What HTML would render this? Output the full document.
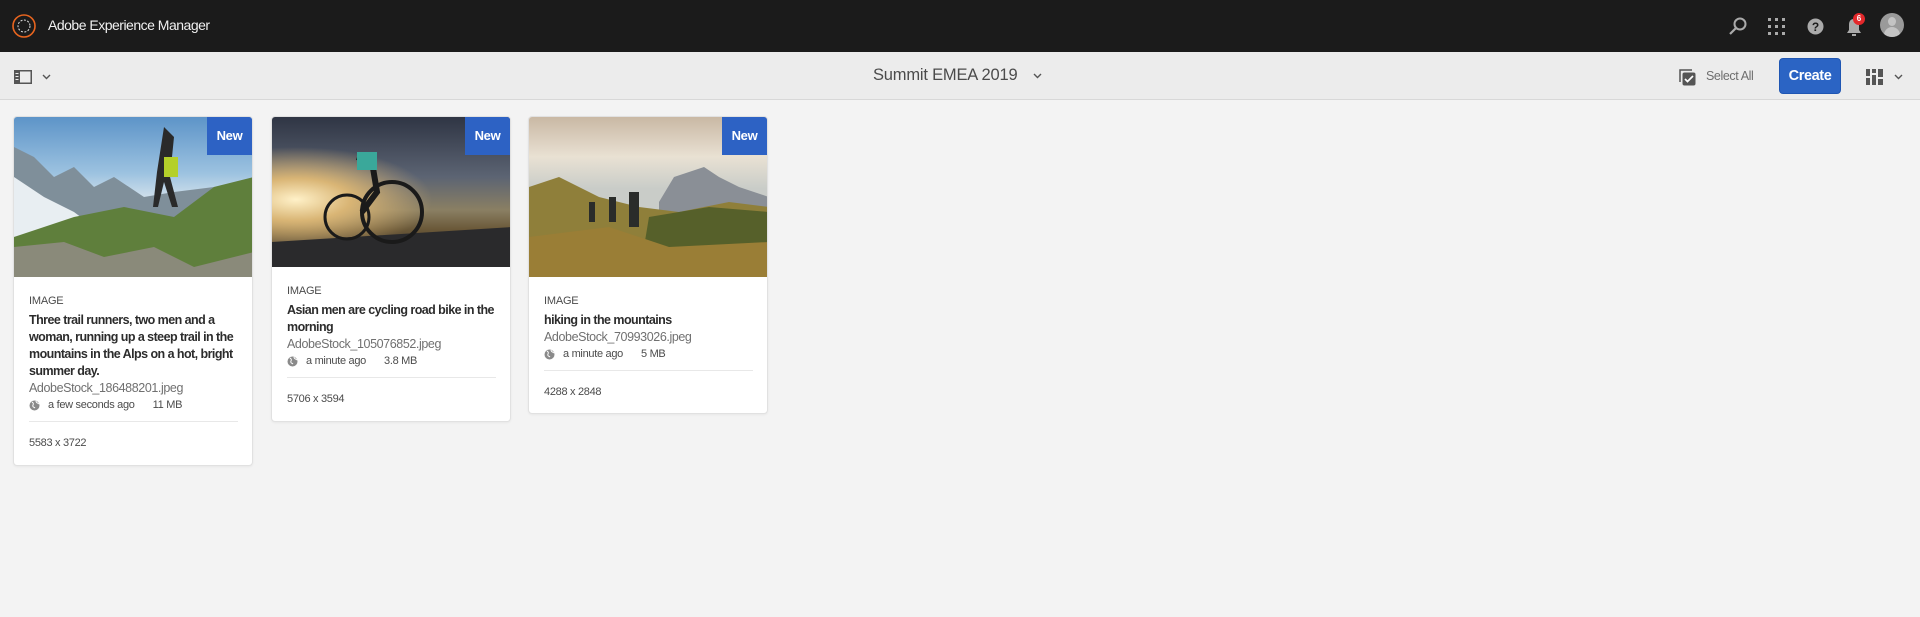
<!DOCTYPE html>
<html><head><meta charset="utf-8"><style>
*{box-sizing:border-box;margin:0;padding:0}
body{width:1920px;height:617px;background:#f3f3f3;font-family:"Liberation Sans",sans-serif;position:relative;overflow:hidden;color:#2c2c2c}
.hdr{position:absolute;left:0;top:0;width:1920px;height:52px;background:#1b1b1b}
.tb{position:absolute;left:0;top:52px;width:1920px;height:48px;background:#ececec;border-bottom:1px solid #d8d8d8}
.abs{position:absolute}
.card{position:absolute;top:116px;width:240px;background:#fff;border:1px solid #e1e1e1;border-radius:4px;box-shadow:0 1px 2px rgba(0,0,0,.05);overflow:hidden}
.img{position:relative;width:100%;overflow:hidden}
.new{position:absolute;right:0;top:0;width:45px;height:38px;background:#2d62c4;color:#fff;font-size:13px;font-weight:bold;text-align:center;line-height:38px;letter-spacing:-.3px}
.body{padding:16px 14px 15px 15px}
.k{font-size:11px;line-height:16px;color:#4b4b4b;margin-bottom:3px;letter-spacing:-.2px}
.t{font-size:12.5px;line-height:17px;font-weight:bold;color:#2c2c2c;letter-spacing:-.55px}
.f{font-size:12.5px;line-height:17px;color:#707070;letter-spacing:-.4px}
.m{font-size:11px;line-height:17px;color:#4b4b4b;display:flex;align-items:center;letter-spacing:-.3px}
.m svg{margin-right:8px}
.hr{border-top:1px solid #e8e8e8;margin-top:7px;margin-right:0}
.d{font-size:11px;line-height:17px;color:#4b4b4b;margin-top:13px;letter-spacing:-.3px}
</style></head><body>
<div class="hdr"></div>
<svg class="abs" style="left:12px;top:14px" width="24" height="24" viewBox="0 0 24 24"><circle cx="12" cy="12" r="11" fill="none" stroke="#e8651f" stroke-width="1.6"/><circle cx="12" cy="12" r="6" fill="none" stroke="#ddd" stroke-width="1" stroke-dasharray="2 1.5"/></svg>
<div class="abs" style="left:48px;top:17px;font-size:14px;color:#f0f0f0;letter-spacing:-.5px">Adobe Experience Manager</div>
<svg class="abs" style="left:1728px;top:16px" width="20" height="20" viewBox="0 0 20 20"><circle cx="12" cy="8" r="5.5" fill="none" stroke="#aaa" stroke-width="2"/><path d="M8 12L2 18" stroke="#aaa" stroke-width="2.2"/></svg>
<svg class="abs" style="left:1768px;top:18px" width="17" height="17" viewBox="0 0 17 17" fill="#aaa"><rect x="0" y="0" width="3" height="3"/><rect x="7" y="0" width="3" height="3"/><rect x="14" y="0" width="3" height="3"/><rect x="0" y="7" width="3" height="3"/><rect x="7" y="7" width="3" height="3"/><rect x="14" y="7" width="3" height="3"/><rect x="0" y="14" width="3" height="3"/><rect x="7" y="14" width="3" height="3"/><rect x="14" y="14" width="3" height="3"/></svg>
<svg class="abs" style="left:1807px;top:18px" width="17" height="17" viewBox="0 0 17 17"><circle cx="8.5" cy="8.5" r="8" fill="#aaa"/><text x="8.5" y="13" text-anchor="middle" font-size="12" font-weight="bold" fill="#1b1b1b" font-family="Liberation Sans">?</text></svg>
<svg class="abs" style="left:1845px;top:16px" width="18" height="22" viewBox="0 0 18 22"><path d="M9 3C5 3 4 6 4 9v5l-2 3h14l-2-3V9c0-3-1-6-5-6z" fill="#aaa"/><rect x="7" y="18" width="4" height="2" fill="#aaa"/></svg>
<div class="abs" style="left:1853px;top:13px;width:12px;height:12px;border-radius:50%;background:#e3282b;color:#fff;font-size:8px;text-align:center;line-height:12px;font-weight:bold">6</div>
<div class="abs" style="left:1880px;top:13px;width:24px;height:24px;border-radius:50%;background:#9a9a9a;overflow:hidden"><div style="position:absolute;left:8px;top:4px;width:8px;height:9px;border-radius:50%;background:#c4c4c4"></div><div style="position:absolute;left:4px;top:14px;width:16px;height:12px;border-radius:8px 8px 0 0;background:#c4c4c4"></div></div>
<div class="tb"></div>
<svg class="abs" style="left:14px;top:70px" width="18" height="14" viewBox="0 0 18 14"><rect x="0.75" y="0.75" width="16.5" height="12.5" fill="none" stroke="#555" stroke-width="1.5"/><rect x="0" y="0" width="6" height="14" fill="#555"/><rect x="1.5" y="3" width="3" height="1" fill="#ececec"/><rect x="1.5" y="6" width="3" height="1" fill="#ececec"/><rect x="1.5" y="9" width="3" height="1" fill="#ececec"/></svg>
<svg class="abs" style="left:42px;top:74px" width="9" height="6" viewBox="0 0 9 6"><path d="M1 1l3.5 3.5L8 1" fill="none" stroke="#555" stroke-width="1.4"/></svg>
<div class="abs" style="left:873px;top:66px;font-size:16.5px;color:#4b4b4b;letter-spacing:-.2px">Summit EMEA 2019</div>
<svg class="abs" style="left:1033px;top:73px" width="9" height="6" viewBox="0 0 9 6"><path d="M1 1l3.5 3.5L8 1" fill="none" stroke="#555" stroke-width="1.4"/></svg>
<svg class="abs" style="left:1679px;top:69px" width="17" height="17" viewBox="0 0 17 17"><path d="M1 13V1h12" fill="none" stroke="#555" stroke-width="1.5"/><rect x="3.5" y="3.5" width="13" height="13" rx="2" fill="#555"/><path d="M6 10l2.5 2.5L14 7" fill="none" stroke="#fff" stroke-width="1.7"/></svg>
<div class="abs" style="left:1706px;top:69px;font-size:12.5px;color:#6e6e6e;letter-spacing:-.4px">Select All</div>
<div class="abs" style="left:1779px;top:58px;width:62px;height:36px;background:#2b64c4;border:1px solid #1f56b3;border-radius:4px;color:#fff;font-size:14.5px;font-weight:bold;text-align:center;line-height:34px;letter-spacing:-.4px">Create</div>
<svg class="abs" style="left:1866px;top:69px" width="17" height="16" viewBox="0 0 17 16" fill="#555"><rect x="0" y="0" width="4" height="7"/><rect x="0" y="9" width="4" height="7"/><rect x="6" y="0" width="4" height="4"/><rect x="6" y="6" width="4" height="10"/><rect x="12" y="0" width="5" height="8"/><rect x="12" y="10" width="5" height="6"/></svg>
<svg class="abs" style="left:1894px;top:74px" width="9" height="6" viewBox="0 0 9 6"><path d="M1 1l3.5 3.5L8 1" fill="none" stroke="#555" stroke-width="1.4"/></svg>

<div class="card" style="left:13px;height:350px">
<div class="img" style="height:160px;background:linear-gradient(180deg,#5d94c8 0%,#9cc2e0 35%,#dfe8ee 55%)">
<svg class="abs" style="left:0;top:0" width="240" height="160" viewBox="0 0 240 160"><path d="M0 30L20 40L40 60L60 50L80 70L100 60L130 80L160 75L200 70L240 60V160H0Z" fill="#7f8f9a"/><path d="M0 60L30 80L60 95L80 110L0 120Z" fill="#e8eef2"/><path d="M0 120L60 100L110 90L160 100L200 70L240 60V160H0Z" fill="#5f7f3c"/><path d="M0 130L50 125L90 140L140 130L180 150L240 135V160H0Z" fill="#8a8a7a"/><path d="M150 10l10 10l-4 40l8 30l-6 0l-8-25l-6 25l-5 0l4-35z" fill="#2a2a2a"/><path d="M150 40h14v20h-14z" fill="#b4d02a"/></svg>
<div class="new">New</div></div>
<div class="body"><div class="k">IMAGE</div><div class="t">Three trail runners, two men and a woman, running up a steep trail in the mountains in the Alps on a hot, bright summer day.</div><div class="f">AdobeStock_186488201.jpeg</div>
<div class="m"><svg width="11" height="11" viewBox="0 0 11 11"><circle cx="5.5" cy="5.5" r="5" fill="#8a8a8a"/><path d="M3 2c1 1 2 1 1 3s1 2 2 3M7 1c0 2 2 2 3 3" stroke="#fff" stroke-width="1" fill="none"/></svg>a few seconds ago<span style="margin-left:18px">11 MB</span></div>
<div class="hr"></div><div class="d">5583 x 3722</div></div></div>

<div class="card" style="left:271px;height:306px">
<div class="img" style="height:150px;background:radial-gradient(ellipse at 10% 55%,#fff1c8 0%,#d9b575 18%,rgba(80,80,100,0) 45%),linear-gradient(180deg,#2f3544 0%,#5c6473 40%,#8a7f63 62%,#6a5838 75%,#2f2c2b 100%)">
<svg class="abs" style="left:0;top:0" width="240" height="150" viewBox="0 0 240 150"><path d="M0 125L240 110V150H0Z" fill="#2a2a2c"/><circle cx="120" cy="95" r="30" fill="none" stroke="#1a1a1a" stroke-width="4"/><circle cx="75" cy="100" r="22" fill="none" stroke="#1a1a1a" stroke-width="3"/><path d="M85 40l15 5l5 30l-15 20" fill="none" stroke="#1a1a1a" stroke-width="6"/><path d="M85 35h20v18h-20z" fill="#3aa89a"/></svg>
<div class="new">New</div></div>
<div class="body"><div class="k">IMAGE</div><div class="t">Asian men are cycling road bike in the morning</div><div class="f">AdobeStock_105076852.jpeg</div>
<div class="m"><svg width="11" height="11" viewBox="0 0 11 11"><circle cx="5.5" cy="5.5" r="5" fill="#8a8a8a"/><path d="M3 2c1 1 2 1 1 3s1 2 2 3M7 1c0 2 2 2 3 3" stroke="#fff" stroke-width="1" fill="none"/></svg>a minute ago<span style="margin-left:18px">3.8 MB</span></div>
<div class="hr"></div><div class="d">5706 x 3594</div></div></div>

<div class="card" style="left:528px;height:298px">
<div class="img" style="height:160px;background:linear-gradient(180deg,#c9b8a4 0%,#e9e1d3 25%,#c9ccc8 45%)">
<svg class="abs" style="left:0;top:0" width="240" height="160" viewBox="0 0 240 160"><path d="M130 85L145 60L160 55L175 50L190 60L210 70L240 80V110H130Z" fill="#8a8f96"/><path d="M0 70L30 60L70 80L110 90L150 95L200 85L240 90V160H0Z" fill="#8f7f3a"/><path d="M120 100L180 90L240 95V160H110Z" fill="#56602a"/><path d="M0 120L80 110L140 130L240 125V160H0Z" fill="#9a7e36"/><path d="M60 85h6v20h-6zM80 80h7v25h-7zM100 75h10v35h-10z" fill="#2a2c2a"/></svg>
<div class="new">New</div></div>
<div class="body"><div class="k">IMAGE</div><div class="t">hiking in the mountains</div><div class="f">AdobeStock_70993026.jpeg</div>
<div class="m"><svg width="11" height="11" viewBox="0 0 11 11"><circle cx="5.5" cy="5.5" r="5" fill="#8a8a8a"/><path d="M3 2c1 1 2 1 1 3s1 2 2 3M7 1c0 2 2 2 3 3" stroke="#fff" stroke-width="1" fill="none"/></svg>a minute ago<span style="margin-left:18px">5 MB</span></div>
<div class="hr"></div><div class="d">4288 x 2848</div></div></div>
</body></html>
